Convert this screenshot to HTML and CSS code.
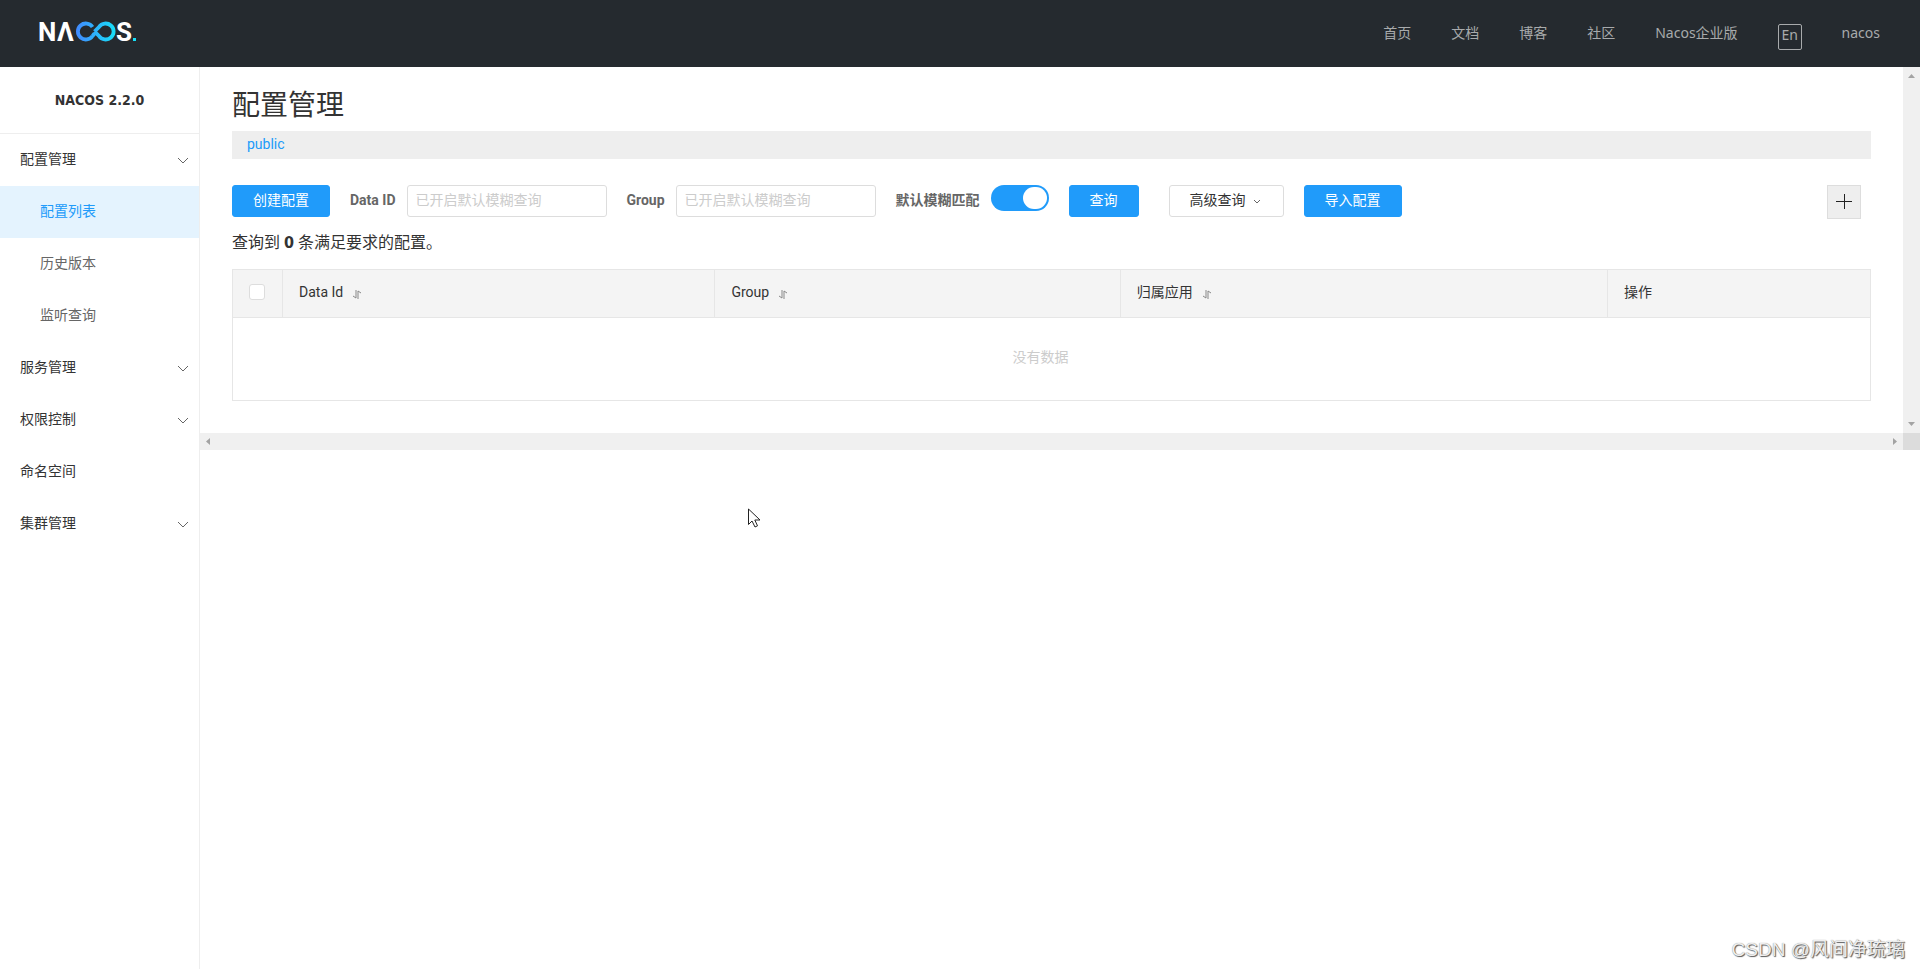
FILE: index.html
```html
<!DOCTYPE html>
<html lang="zh-CN">
<head>
<meta charset="utf-8">
<title>Nacos</title>
<link rel="stylesheet" href="styles.css">
</head>
<body>
<header class="topbar">
  <a class="logo" href="#" aria-label="Nacos">
    <svg width="106" height="40" viewBox="-4 -8 106 40">
      <defs>
        <linearGradient id="brand" gradientUnits="userSpaceOnUse" x1="36" y1="0" x2="76" y2="0">
          <stop offset="0" stop-color="#4289ff"/>
          <stop offset="1" stop-color="#16e0f8"/>
        </linearGradient>
      </defs>
      <g class="logo-text">
        <text x="-2" y="21">N</text>
        <text x="17" y="21">Λ</text>
        <text x="76" y="21">S</text>
      </g>
      <path d="M52.500 7A8 8 0 1 0 52.500 16M52.500 16L54.500 13.500M54.500 11.500L59 7A8 8 0 1 1 59 16L54.500 11.500" fill="none" stroke="url(#brand)" stroke-width="3.800"/>
      <rect x="93" y="18" width="3" height="3" fill="#16e0f8"/>
    </svg>
  </a>
  <nav class="topnav">
    <a href="#">首页</a>
    <a href="#">文档</a>
    <a href="#">博客</a>
    <a href="#">社区</a>
    <a href="#">Nacos企业版</a>
    <button class="lang" type="button">En</button>
    <a href="#">nacos</a>
  </nav>
</header>

<div class="layout">
  <aside class="sidebar">
    <h2 class="version">NACOS 2.2.0</h2>
    <ul class="menu">
      <li><a href="#"><span>配置管理</span><svg class="chev" viewBox="0 0 12 7"><path d="M1 1l5 5 5-5"/></svg></a></li>
      <li><a class="sub active" href="#"><span>配置列表</span></a></li>
      <li><a class="sub" href="#"><span>历史版本</span></a></li>
      <li><a class="sub" href="#"><span>监听查询</span></a></li>
      <li><a href="#"><span>服务管理</span><svg class="chev" viewBox="0 0 12 7"><path d="M1 1l5 5 5-5"/></svg></a></li>
      <li><a href="#"><span>权限控制</span><svg class="chev" viewBox="0 0 12 7"><path d="M1 1l5 5 5-5"/></svg></a></li>
      <li><a href="#"><span>命名空间</span></a></li>
      <li><a href="#"><span>集群管理</span><svg class="chev" viewBox="0 0 12 7"><path d="M1 1l5 5 5-5"/></svg></a></li>
    </ul>
  </aside>

  <div class="viewport">
    <main class="content">
      <h1 class="title">配置管理</h1>
      <div class="namespaces"><a href="#">public</a></div>

      <form class="toolbar">
        <button class="btn primary" type="button">创建配置</button>
        <div class="field">
          <label for="data-id">Data ID</label>
          <input id="data-id" class="text" type="text" placeholder="已开启默认模糊查询">
        </div>
        <div class="field">
          <label for="group">Group</label>
          <input id="group" class="text" type="text" placeholder="已开启默认模糊查询">
        </div>
        <div class="field">
          <label for="fuzzy">默认模糊匹配</label>
          <input id="fuzzy" class="switch" type="checkbox" checked>
        </div>
        <button class="btn primary search" type="button">查询</button>
        <button class="btn" type="button">高级查询<svg class="mini" viewBox="0 0 8 5"><path d="M1 1l3 3 3-3"/></svg></button>
        <button class="btn primary" type="button">导入配置</button>
        <button class="add" type="button" aria-label="新建"><svg viewBox="0 0 16 16"><path d="M0 7.500h16M8.500 0v15"/></svg></button>
      </form>

      <p class="result">查询到 <strong>0</strong> 条满足要求的配置。</p>

      <table class="grid">
        <colgroup><col class="c-check"><col class="c-id"><col class="c-group"><col class="c-app"><col class="c-op"></colgroup>
        <thead>
          <tr>
            <th class="check"><input type="checkbox" aria-label="全选"></th>
            <th>Data Id<svg class="sort" viewBox="0 0 8 9"><path d="M3 0v8L0 6M5 9V1l3 2"/></svg></th>
            <th>Group<svg class="sort" viewBox="0 0 8 9"><path d="M3 0v8L0 6M5 9V1l3 2"/></svg></th>
            <th>归属应用<svg class="sort" viewBox="0 0 8 9"><path d="M3 0v8L0 6M5 9V1l3 2"/></svg></th>
            <th>操作</th>
          </tr>
        </thead>
        <tbody>
          <tr><td class="empty" colspan="5">没有数据</td></tr>
        </tbody>
      </table>
    </main>
    <div class="bar vertical">
      <svg width="7" height="4" viewBox="0 0 7 4"><path d="M0 4L3.500 0 7 4z"/></svg>
      <svg width="7" height="4" viewBox="0 0 7 4"><path d="M0 0h7L3.500 4z"/></svg>
    </div>
    <div class="bar horizontal">
      <svg width="4" height="7" viewBox="0 0 4 7"><path d="M4 0v7L0 3.500z"/></svg>
      <svg width="4" height="7" viewBox="0 0 4 7"><path d="M0 0v7l4-3.500z"/></svg>
    </div>
    <div class="corner"></div>
  </div>
</div>

<svg class="cursor" width="13" height="20" viewBox="0 0 13 20"><path d="M.5 1v15.500l3.500-3.500 3 6 2.500-1.200L6.800 12H12z"/></svg>
<div class="watermark">CSDN @风间净琉璃</div>
</body>
</html>
```

FILE: styles.css
```css
* { box-sizing: border-box; }

body {
  margin: 0;
  min-height: 100vh;
  display: flex;
  flex-direction: column;
  background: #fff;
  color: #333;
  font: 14px/20px Roboto, "Noto Sans CJK SC", sans-serif;
}

a { color: inherit; text-decoration: none; }
button, input { font: inherit; margin: 0; }
button { cursor: pointer; }

.topbar {
  height: 67px;
  padding: 0 40px 0 36px;
  display: flex;
  justify-content: space-between;
  align-items: center;
  background: #252a2f;
}
.logo { display: flex; padding-bottom: 4px; }
.logo-text { font: 700 26px Roboto, sans-serif; fill: #fff; }

.topnav {
  display: flex;
  align-items: center;
  gap: 40px;
  padding-bottom: 2px;
  color: #a8aaac;
  font-family: "Noto Sans", "Noto Sans CJK SC", sans-serif;
}
.lang {
  width: 24px;
  height: 26px;
  margin-top: 8px;
  padding: 0 0 4px;
  border: 1px solid #a8aaac;
  border-radius: 2px;
  background: none;
  color: inherit;
  line-height: 20px;
}

.layout { flex: 1; display: flex; }

.sidebar {
  flex: 0 0 200px;
  border-right: 1px solid #eee;
}
.version {
  margin: 0;
  padding: 23px 0;
  border-bottom: 1px solid #eee;
  font: bold 14px/20px "DejaVu Sans Condensed", "DejaVu Sans", sans-serif;
  text-align: center;
}
.menu { margin: 0; padding: 0; list-style: none; }
.menu a {
  display: flex;
  align-items: center;
  justify-content: space-between;
  height: 52px;
  padding: 0 10px 0 20px;
}
.menu span { padding-bottom: 3px; }
.menu .sub { padding-left: 40px; color: #666; }
.menu .active { background: #e4f3fe; color: #209bfa; }
.chev { width: 12px; height: 7px; }
.chev, .mini, .sort, .add svg { fill: none; stroke: #666; }

.viewport {
  flex: 1;
  min-width: 0;
  display: grid;
  grid-template-columns: minmax(0, 1fr) 17px;
  grid-template-rows: auto 17px;
  align-content: start;
}
.content { padding: 21px 32px 32px; }
.bar {
  display: flex;
  align-items: center;
  justify-content: space-between;
  background: #f0f0f0;
}
.bar svg { fill: #a3a3a3; }
.vertical { flex-direction: column; padding: 7px 0; }
.horizontal { padding: 0 6px; }
.corner { background: #dcdcdc; }

.title { margin: 0 0 7px; font-size: 28px; line-height: 36px; font-weight: 400; }
.namespaces {
  padding: 3px 15px 5px;
  background: #eee;
  color: #209bfa;
}

.toolbar {
  display: flex;
  align-items: flex-start;
  gap: 20px;
  margin: 26px 0 12px;
}
.field { display: flex; gap: 11px; }
.field label { line-height: 30px; font-weight: 700; color: #666; }
.text {
  width: 200px;
  height: 32px;
  padding: 0 8px 2px;
  border: 1px solid #ddd;
  border-radius: 3px;
}
.text::placeholder { color: #ccc; }
.switch {
  appearance: none;
  width: 58px;
  height: 26px;
  padding: 2px;
  border-radius: 13px;
  background: #209bfa;
}
.switch::before {
  content: "";
  display: block;
  width: 24px;
  height: 22px;
  margin-left: auto;
  border-radius: 11px;
  background: #fff;
}
.btn {
  display: flex;
  align-items: center;
  height: 32px;
  padding: 0 20px 2px;
  border: 1px solid #ddd;
  border-radius: 3px;
  background: #fff;
  color: #333;
}
.primary { border-color: #209bfa; background: #209bfa; color: #fff; }
.search { margin-right: 10px; }
.mini { width: 8px; height: 5px; margin: 2px 2px 0 7px; }
.add {
  width: 34px;
  height: 34px;
  margin: 0 10px 0 auto;
  padding: 0;
  display: grid;
  place-items: center;
  border: 1px solid #ddd;
  background: #eee;
}
.add svg { width: 16px; height: 16px; stroke: #222; }

.result { margin: 0 0 14px; font-size: 16px; line-height: 24px; }
.result strong { font-family: "DejaVu Sans Condensed", "DejaVu Sans", sans-serif; }

.grid {
  width: 100%;
  table-layout: fixed;
  border-collapse: separate;
  border-spacing: 0;
  border: 1px solid #e6e6e6;
  border-right: 0;
}
.c-check { width: 50px; }
.c-id { width: 26.4%; }
.c-group { width: 24.75%; }
.c-app { width: 29.75%; }
.grid th {
  height: 48px;
  padding: 0 16px 4px;
  border-right: 1px solid #e6e6e6;
  border-bottom: 1px solid #e6e6e6;
  background: #f4f4f4;
  font-weight: 400;
  text-align: left;
}
.grid .check input {
  appearance: none;
  display: block;
  width: 16px;
  height: 16px;
  border: 1px solid #ddd;
  border-radius: 3px;
  background: #fff;
}
.sort { width: 8px; height: 9px; margin-left: 10px; vertical-align: -2px; stroke: #888; }
.grid .empty {
  height: 82px;
  padding: 0 22px 4px 0;
  border-right: 1px solid #e6e6e6;
  color: #ccc;
  text-align: center;
}

.cursor { position: absolute; left: 748px; top: 508px; fill: #fff; stroke: #222; }
.watermark {
  position: absolute;
  right: 15px;
  bottom: 6px;
  color: #eee;
  font: 19px/26px "Liberation Sans", "Noto Sans CJK SC", sans-serif;
  text-shadow: 1px 1px 1px #555, 0 0 1px #888;
}
```
